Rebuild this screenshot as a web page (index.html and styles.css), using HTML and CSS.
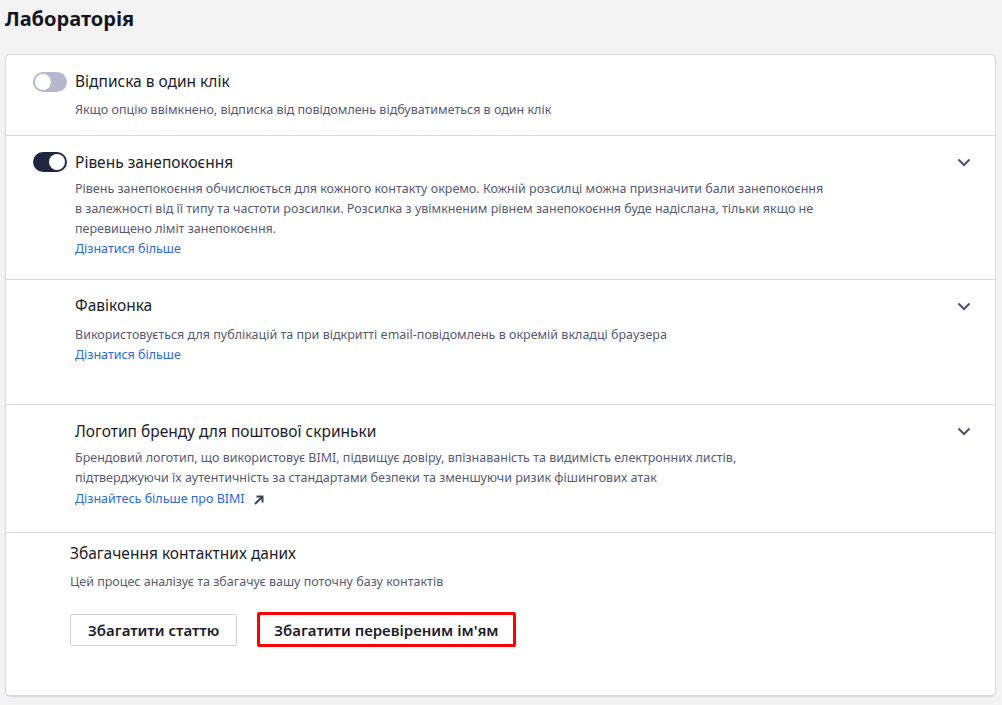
FILE: index.html
```html
<!DOCTYPE html>
<html lang="uk">
<head>
<meta charset="utf-8">
<link rel="stylesheet" href="styles.css">
</head>
<body>
<div class="page">
  <h1 class="page-title">Лабораторія</h1>
  <div class="card">
    <div class="row row-1">
      <span class="toggle"><span class="knob"></span></span>
      <div class="content">
        <div class="title">Відписка в один клік</div>
        <p class="desc">Якщо опцію ввімкнено, відписка від повідомлень відбуватиметься в один клік</p>
      </div>
    </div>
    <div class="row row-2">
      <span class="toggle on"><span class="knob"></span></span>
      <div class="content">
        <div class="title">Рівень занепокоєння</div>
        <p class="desc">Рівень занепокоєння обчислюється для кожного контакту окремо. Кожній розсилці можна призначити бали занепокоєння в залежності від її типу та частоти розсилки. Розсилка з увімкненим рівнем занепокоєння буде надіслана, тільки якщо не перевищено ліміт занепокоєння.</p>
        <a class="link" href="#">Дізнатися більше</a>
      </div>
      <svg class="chevron" width="14" height="9" viewBox="0 0 14 9"><path d="M1.5 1.5 L7 7 L12.5 1.5" fill="none" stroke="#4a5170" stroke-width="2"/></svg>
    </div>
    <div class="row row-3">
      <span class="toggle-space"></span>
      <div class="content">
        <div class="title">Фавіконка</div>
        <p class="desc">Використовується для публікацій та при відкритті email-повідомлень в окремій вкладці браузера</p>
        <a class="link" href="#">Дізнатися більше</a>
      </div>
      <svg class="chevron" width="14" height="9" viewBox="0 0 14 9"><path d="M1.5 1.5 L7 7 L12.5 1.5" fill="none" stroke="#4a5170" stroke-width="2"/></svg>
    </div>
    <div class="row row-4">
      <span class="toggle-space"></span>
      <div class="content">
        <div class="title">Логотип бренду для поштової скриньки</div>
        <p class="desc">Брендовий логотип, що використовує BIMI, підвищує довіру, впізнаваність та видимість електронних листів, підтверджуючи їх аутентичність за стандартами безпеки та зменшуючи ризик фішингових атак</p>
        <a class="link" href="#">Дізнайтесь більше про BIMI <svg class="ext" width="12" height="12" viewBox="0 0 12 12"><path d="M2 10 L9.5 2.5 M3.5 2.5 H9.5 V8.5" fill="none" stroke="#3b4260" stroke-width="2"/></svg></a>
      </div>
      <svg class="chevron" width="14" height="9" viewBox="0 0 14 9"><path d="M1.5 1.5 L7 7 L12.5 1.5" fill="none" stroke="#4a5170" stroke-width="2"/></svg>
    </div>
    <div class="row-enrich">
      <div class="title">Збагачення контактних даних</div>
      <p class="desc">Цей процес аналізує та збагачує вашу поточну базу контактів</p>
      <div class="buttons">
        <button class="btn">Збагатити статтю</button>
        <button class="btn btn-marked">Збагатити перевіреним ім'ям</button>
      </div>
    </div>
  </div>
</div>
</body>
</html>
```
FILE: styles.css
```css
* { box-sizing: border-box; }
html, body { margin: 0; padding: 0; }
body {
  background: #f3f3f4;
  font-family: "Noto Sans", "Open Sans", sans-serif;
  color: #1c1d2b;
  width: 1002px;
  height: 705px;
  overflow: hidden;
}
.page { padding: 0 6px 0 5px; }
.page-title {
  margin: 0;
  height: 54px;
  padding-top: 5px;
  font-size: 20px;
  font-weight: 700;
  line-height: 28px;
  color: #15161f;
}
.card {
  background: #fff;
  border: 1px solid #d7d8e2;
  border-bottom-width: 2px;
  border-radius: 5px;
  height: 643px;
}
.row {
  display: flex;
  align-items: flex-start;
  border-bottom: 1px solid #d7d8e2;
  padding: 14px 24px 0 27px;
}
.row-1 { height: 81px; }
.row-2 { height: 144px; }
.row-3 { height: 125px; }
.row-4 { height: 128px; }
.row-1 .desc { margin-top: 7px; }
.row-3 .title { margin-top: -1px; }
.row-3 .desc { margin-top: 8px; }
.toggle {
  flex: none;
  width: 34px;
  height: 20px;
  border-radius: 10px;
  background: #b5b7cc;
  margin-top: 3px;
  position: relative;
}
.row-2 .toggle { margin-top: 2px; }
.toggle .knob {
  position: absolute;
  top: 2px;
  left: 2px;
  width: 16px;
  height: 16px;
  border-radius: 50%;
  background: #fff;
}
.toggle.on { background: #1f2640; }
.toggle.on .knob { left: 16px; }
.toggle-space { flex: none; width: 34px; }
.content { flex: 1; margin-left: 8px; }
.title {
  font-size: 15.5px;
  line-height: 24px;
  color: #1c1d2b;
}
.desc {
  margin: 5px 0 0;
  font-size: 12.5px;
  line-height: 20px;
  color: #565b75;
  max-width: 754px;
}
.link {
  display: flex;
  align-items: center;
  gap: 8px;
  width: max-content;
  font-size: 12.5px;
  line-height: 20px;
  height: 20px;
  color: #2a6ad9;
  text-decoration: none;
}
.row-4 .link { margin-top: 1px; }
.ext { margin-top: 2px; }
.chevron { flex: none; margin-top: 8px; }
.row-enrich { padding: 8px 20px 0 64px; }
.row-enrich .desc { margin-top: 7px; }
.buttons { display: flex; gap: 20px; margin-top: 20px; align-items: center; }
.btn {
  font-family: inherit;
  font-size: 15px;
  font-weight: 600;
  color: #1c1d2b;
  background: #fff;
  border: 1px solid #cfd1db;
  border-radius: 2px;
  height: 32px;
  padding: 0 17px;
}
.btn-marked {
  border: 3px solid #ff0000;
  height: 35px;
  padding: 0 14px;
}
```
